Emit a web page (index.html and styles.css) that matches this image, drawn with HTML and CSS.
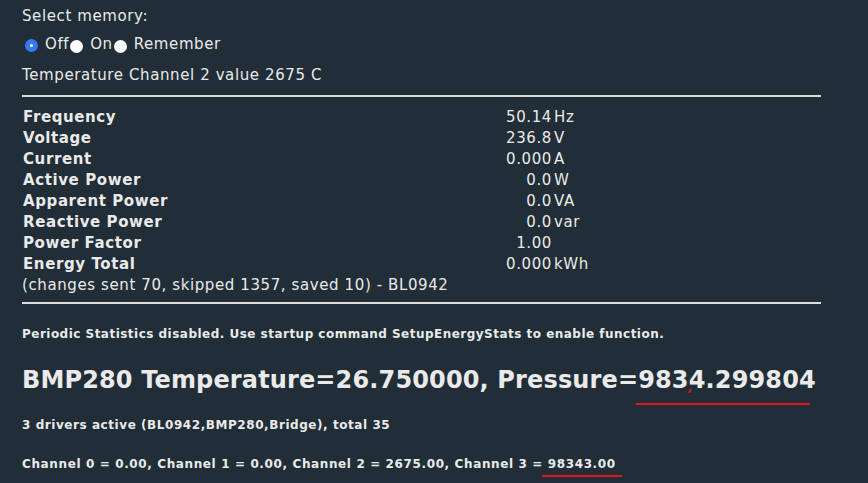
FILE: index.html
```html
<!DOCTYPE html>
<html>
<head>
<meta charset="utf-8">
<link rel="stylesheet" href="styles.css">
</head>
<body>
<div class="page">
  <div class="line first">Select memory:</div>
  <div class="line radios">
    <span class="radio checked"></span><span class="rlabel">Off</span><span class="radio"></span><span class="rlabel">On</span><span class="radio"></span><span class="rlabel">Remember</span>
  </div>
  <div class="line temp">Temperature Channel 2 value 2675 C</div>
  <hr class="rule">
  <div class="stats">
    <div class="lbl">Frequency</div><div class="val">50.14</div><div class="unit">Hz</div>
    <div class="lbl">Voltage</div><div class="val">236.8</div><div class="unit">V</div>
    <div class="lbl">Current</div><div class="val">0.000</div><div class="unit">A</div>
    <div class="lbl">Active Power</div><div class="val">0.0</div><div class="unit">W</div>
    <div class="lbl">Apparent Power</div><div class="val">0.0</div><div class="unit">VA</div>
    <div class="lbl">Reactive Power</div><div class="val">0.0</div><div class="unit">var</div>
    <div class="lbl">Power Factor</div><div class="val">1.00</div><div class="unit"></div>
    <div class="lbl">Energy Total</div><div class="val">0.000</div><div class="unit">kWh</div>
  </div>
  <div class="line changes">(changes sent 70, skipped 1357, saved 10) - BL0942</div>
  <hr class="rule rule2">
  <div class="small periodic">Periodic Statistics disabled. Use startup command SetupEnergyStats to enable function.</div>
  <h1 class="bmp">BMP280 Temperature=26.750000, Pressure=<span class="mark mark1">9834.299804<span class="tick"></span></span></h1>
  <div class="small drivers">3 drivers active (BL0942,BMP280,Bridge), total 35</div>
  <div class="small channels">Channel 0 = 0.00, Channel 1 = 0.00, Channel 2 = 2675.00, Channel 3 = <span class="mark mark2">98343.00</span></div>
</div>
</body>
</html>
```
FILE: styles.css
```css
html, body {
  margin: 0;
  padding: 0;
  background: #212d37;
}
body {
  width: 868px;
  height: 483px;
  overflow: hidden;
  color: #eaeaea;
  font-family: "DejaVu Sans", Verdana, sans-serif;
}
.page {
  padding: 6px 0 0 22px;
  width: 800px;
}
.line {
  font-size: 15px;
  line-height: 21px;
  letter-spacing: 0.6px;
}
.radios {
  margin-top: 7px;
  display: flex;
  align-items: center;
  height: 21px;
}
.radio {
  display: inline-block;
  width: 13px;
  height: 13px;
  border-radius: 50%;
  background: #ffffff;
  margin: 3px 0 0 1px;
  flex: none;
}
.radio.checked {
  background: #3478f6;
  margin: 2px 7px 0 3px;
  position: relative;
}
.radio.checked::after {
  content: "";
  position: absolute;
  left: 5px;
  top: 5px;
  width: 3px;
  height: 3px;
  border-radius: 50%;
  background: #fff;
}
.radio + .rlabel {
  margin-left: 7px;
}
.radio.checked + .rlabel {
  margin-left: 0;
}
.rlabel + .radio {
  margin-left: 1px;
}
.temp {
  margin-top: 10px;
}
.rule {
  border: none;
  height: 2px;
  background: #dcdcdc;
  margin: 9px 0 0 0;
  width: 799px;
}
.stats {
  display: grid;
  grid-template-columns: 482px 48px 1fr;
  font-size: 15px;
  line-height: 21px;
  letter-spacing: 0.6px;
  margin-top: 10px;
}
.lbl {
  font-weight: bold;
  padding-left: 1px;
}
.val {
  text-align: right;
}
.unit {
  padding-left: 2px;
}
.rule2 {
  margin-top: 6px;
}
.small {
  font-size: 12px;
  font-weight: bold;
  letter-spacing: 0.48px;
}
.periodic {
  margin-top: 22px;
  line-height: 16px;
}
.bmp {
  font-size: 24px;
  font-weight: bold;
  letter-spacing: 0.14px;
  margin: 23px 0 0 0;
  line-height: 30px;
}
.drivers {
  margin-top: 22px;
  line-height: 16px;
  letter-spacing: 0.56px;
}
.channels {
  margin-top: 23px;
  line-height: 16px;
  letter-spacing: 0.62px;
}
.mark {
  position: relative;
}
.mark::after {
  content: "";
  position: absolute;
  height: 2px;
  background: #e8141b;
}
.mark1::after {
  left: -2px;
  right: 6px;
  bottom: -11px;
}
.mark2::after {
  left: -6px;
  right: -6px;
  bottom: -6px;
}
.tick {
  position: absolute;
  left: 51px;
  bottom: 1px;
  width: 2px;
  height: 4px;
  background: #e8141b;
  transform: skewX(-20deg);
}
```
